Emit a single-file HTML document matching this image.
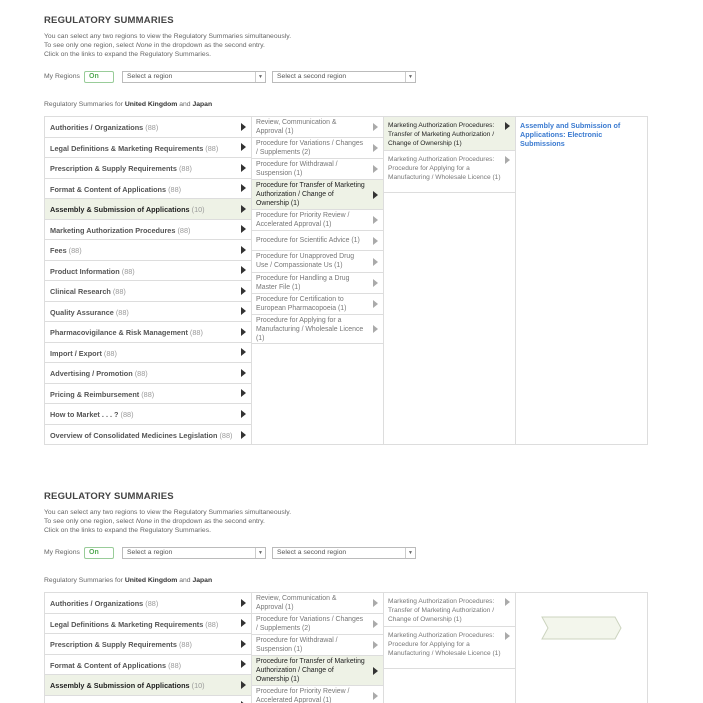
<!DOCTYPE html>
<html style="height:703px;overflow:hidden"><head><meta charset="utf-8"><style>
*{margin:0;padding:0;box-sizing:border-box}
body{width:703px;height:703px;overflow:hidden;background:#fff;font-family:"Liberation Sans",Arial,sans-serif;color:#666;position:relative}
.sec{position:absolute;left:0;width:703px;height:476px;overflow:hidden}
.t{position:absolute;left:44px;top:15px;font-size:9.5px;font-weight:bold;color:#444;letter-spacing:.2px}
.d{position:absolute;left:44px;top:32px;font-size:6.8px;line-height:9px;color:#666}
.mr{position:absolute;left:44px;top:73px;font-size:6.8px;color:#666}
.on{position:absolute;left:84px;top:71px;width:30px;height:12px;border:1px solid #9c9;border-radius:2px;font-size:7px;font-weight:bold;color:#5a5;padding:1px 0 0 4px}
.sel{position:absolute;top:71px;height:12px;border:1px solid #bbb;font-size:6.8px;color:#555;padding:1px 0 0 4px}
.sel b{position:absolute;right:0;top:0;width:10px;height:10px;border-left:1px solid #ccc;font-size:5px;color:#666;text-align:center;line-height:10px;font-weight:normal}
.rs{position:absolute;left:44px;top:101px;font-size:6.8px;color:#666}
.rs b{color:#333}
.col{position:absolute;top:116px;height:329px;border:1px solid #ddd;overflow:hidden}
.c1{left:44px;width:208px}
.c2{left:251px;width:133px}
.c3{left:383px;width:133px}
.c4{left:515px;width:133px}
.r1{height:20.5px;border-bottom:1px solid #ddd;font-size:7.3px;font-weight:bold;color:#555;padding:6px 0 0 5px;position:relative;white-space:nowrap}
.r1 i{font-style:normal;font-weight:normal;color:#999}
.r1.a{background:#eef2e6;color:#222}
.ar{position:absolute;right:5px;top:50%;margin-top:-4px;width:0;height:0;border-left:5px solid #333;border-top:4px solid transparent;border-bottom:4px solid transparent}
.lt{border-left-color:#aaa}
.r2{border-bottom:1px solid #ddd;font-size:6.9px;line-height:8.8px;color:#777;padding:2px 18px 2px 4px;position:relative}
.c3 .r2{padding-right:10px;font-size:6.6px}
.r2.a{background:#eef2e6;color:#222}
.lk{padding:5px 4px;font-size:7.2px;font-weight:bold;color:#3a7ad0;line-height:8.8px}
</style></head><body>

<div class="sec" style="top:0">
<div class="t">REGULATORY SUMMARIES</div>
<div class="d">You can select any two regions to view the Regulatory Summaries simultaneously.<br>To see only one region, select <i>None</i> in the dropdown as the second entry.<br>Click on the links to expand the Regulatory Summaries.</div>
<div class="mr">My Regions</div><div class="on">On</div>
<div class="sel" style="left:122px;width:144px">Select a region<b>▼</b></div>
<div class="sel" style="left:272px;width:144px">Select a second region<b>▼</b></div>
<div class="rs">Regulatory Summaries for <b>United Kingdom</b> and <b>Japan</b></div>
<div class="col c1">
<div class="r1">Authorities / Organizations <i>(88)</i><span class="ar"></span></div>
<div class="r1">Legal Definitions &amp; Marketing Requirements <i>(88)</i><span class="ar"></span></div>
<div class="r1">Prescription &amp; Supply Requirements <i>(88)</i><span class="ar"></span></div>
<div class="r1">Format &amp; Content of Applications <i>(88)</i><span class="ar"></span></div>
<div class="r1 a">Assembly &amp; Submission of Applications <i>(10)</i><span class="ar"></span></div>
<div class="r1">Marketing Authorization Procedures <i>(88)</i><span class="ar"></span></div>
<div class="r1">Fees <i>(88)</i><span class="ar"></span></div>
<div class="r1">Product Information <i>(88)</i><span class="ar"></span></div>
<div class="r1">Clinical Research <i>(88)</i><span class="ar"></span></div>
<div class="r1">Quality Assurance <i>(88)</i><span class="ar"></span></div>
<div class="r1">Pharmacovigilance &amp; Risk Management <i>(88)</i><span class="ar"></span></div>
<div class="r1">Import / Export <i>(88)</i><span class="ar"></span></div>
<div class="r1">Advertising / Promotion <i>(88)</i><span class="ar"></span></div>
<div class="r1">Pricing &amp; Reimbursement <i>(88)</i><span class="ar"></span></div>
<div class="r1">How to Market . . . ? <i>(88)</i><span class="ar"></span></div>
<div class="r1" style="border:0">Overview of Consolidated Medicines Legislation <i>(88)</i><span class="ar"></span></div>
</div>
<div class="col c2">
<div class="r2" style="height:21px">Review, Communication &amp; Approval (1)<span class="ar lt"></span></div>
<div class="r2" style="height:21px">Procedure for Variations / Changes / Supplements (2)<span class="ar lt"></span></div>
<div class="r2" style="height:21px">Procedure for Withdrawal / Suspension (1)<span class="ar lt"></span></div>
<div class="r2 a" style="height:30px">Procedure for Transfer of Marketing Authorization / Change of Ownership (1)<span class="ar"></span></div>
<div class="r2" style="height:21px">Procedure for Priority Review / Accelerated Approval (1)<span class="ar lt"></span></div>
<div class="r2" style="height:20px;padding-top:6px">Procedure for Scientific Advice (1)<span class="ar lt"></span></div>
<div class="r2" style="height:22px">Procedure for Unapproved Drug Use / Compassionate Us (1)<span class="ar lt"></span></div>
<div class="r2" style="height:21px">Procedure for Handling a Drug Master File (1)<span class="ar lt"></span></div>
<div class="r2" style="height:21px">Procedure for Certification to European Pharmacopoeia (1)<span class="ar lt"></span></div>
<div class="r2" style="height:29px">Procedure for Applying for a Manufacturing / Wholesale Licence (1)<span class="ar lt"></span></div>
</div>
<div class="col c3">
<div class="r2 a" style="height:34px;padding-top:5px">Marketing Authorization Procedures: Transfer of Marketing Authorization / Change of Ownership (1)<span class="ar" style="top:9px"></span></div>
<div class="r2" style="height:42px;padding-top:5px">Marketing Authorization Procedures: Procedure for Applying for a Manufacturing / Wholesale Licence (1)<span class="ar lt" style="top:9px"></span></div>
</div>
<div class="col c4"><div class="lk">Assembly and Submission of Applications: Electronic Submissions</div></div>
</div>

<div class="sec" style="top:476px;height:227px">
<div class="t">REGULATORY SUMMARIES</div>
<div class="d">You can select any two regions to view the Regulatory Summaries simultaneously.<br>To see only one region, select <i>None</i> in the dropdown as the second entry.<br>Click on the links to expand the Regulatory Summaries.</div>
<div class="mr">My Regions</div><div class="on">On</div>
<div class="sel" style="left:122px;width:144px">Select a region<b>▼</b></div>
<div class="sel" style="left:272px;width:144px">Select a second region<b>▼</b></div>
<div class="rs">Regulatory Summaries for <b>United Kingdom</b> and <b>Japan</b></div>
<div class="col c1">
<div class="r1">Authorities / Organizations <i>(88)</i><span class="ar"></span></div>
<div class="r1">Legal Definitions &amp; Marketing Requirements <i>(88)</i><span class="ar"></span></div>
<div class="r1">Prescription &amp; Supply Requirements <i>(88)</i><span class="ar"></span></div>
<div class="r1">Format &amp; Content of Applications <i>(88)</i><span class="ar"></span></div>
<div class="r1 a">Assembly &amp; Submission of Applications <i>(10)</i><span class="ar"></span></div>
<div class="r1">Marketing Authorization Procedures <i>(88)</i><span class="ar"></span></div>
</div>
<div class="col c2">
<div class="r2" style="height:21px">Review, Communication &amp; Approval (1)<span class="ar lt"></span></div>
<div class="r2" style="height:21px">Procedure for Variations / Changes / Supplements (2)<span class="ar lt"></span></div>
<div class="r2" style="height:21px">Procedure for Withdrawal / Suspension (1)<span class="ar lt"></span></div>
<div class="r2 a" style="height:30px">Procedure for Transfer of Marketing Authorization / Change of Ownership (1)<span class="ar"></span></div>
<div class="r2" style="height:21px">Procedure for Priority Review / Accelerated Approval (1)<span class="ar lt"></span></div>
</div>
<div class="col c3">
<div class="r2" style="height:34px;padding-top:5px">Marketing Authorization Procedures: Transfer of Marketing Authorization / Change of Ownership (1)<span class="ar lt" style="top:9px"></span></div>
<div class="r2" style="height:42px;padding-top:5px">Marketing Authorization Procedures: Procedure for Applying for a Manufacturing / Wholesale Licence (1)<span class="ar lt" style="top:9px"></span></div>
</div>
<div class="col c4">
<svg style="position:absolute;left:25px;top:23px" width="82" height="24"><polygon points="1,1 74,1 80,12 74,23 1,23 7,12" fill="#f3f6ec" stroke="#ccd4bf" stroke-width="1"/></svg>
</div>
</div>
</body></html>
